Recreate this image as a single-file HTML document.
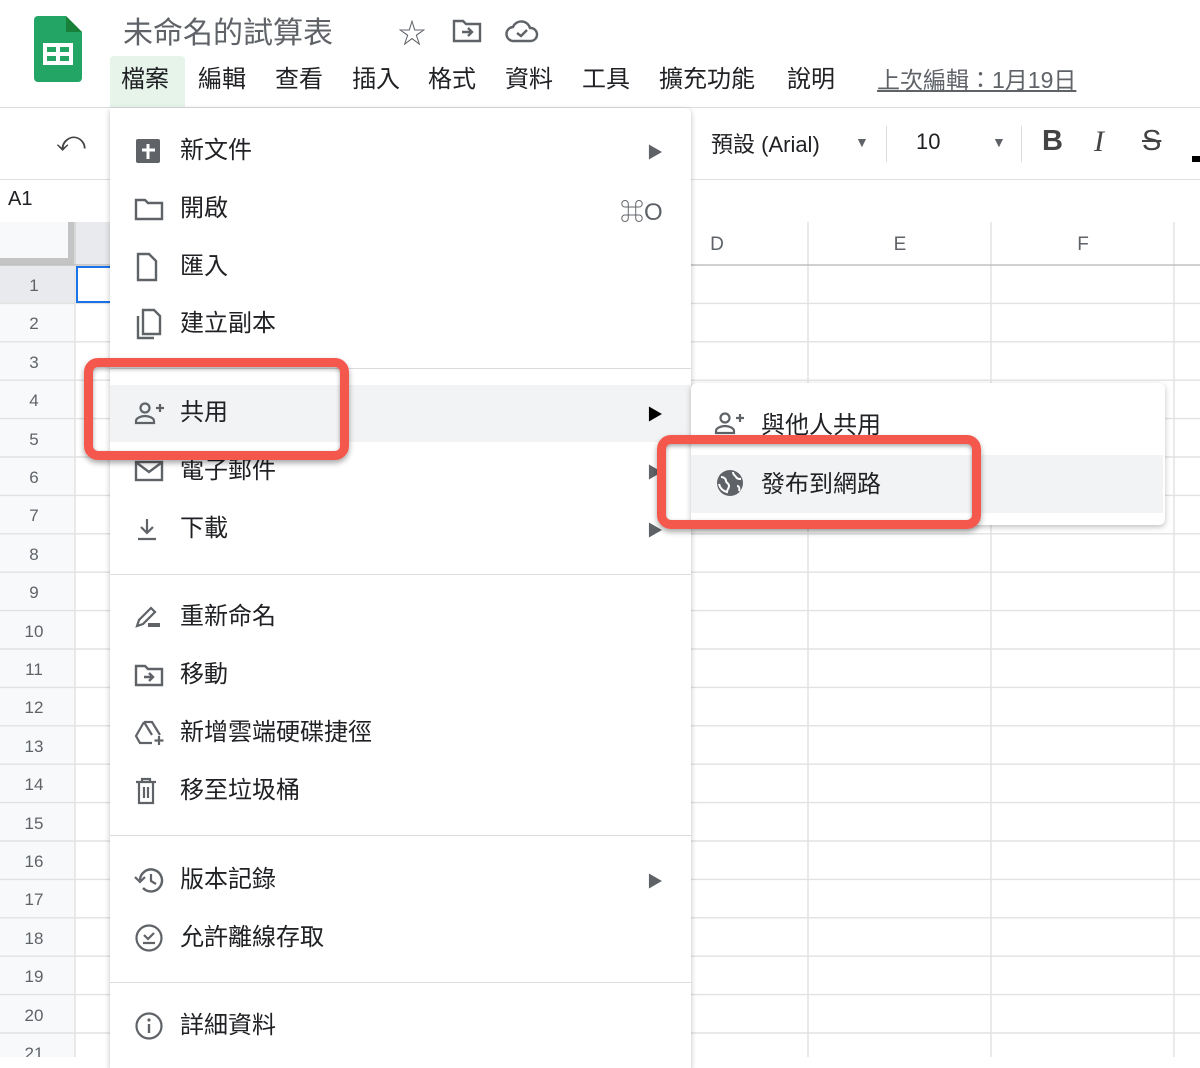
<!DOCTYPE html>
<html><head><meta charset="utf-8"><style>
*{margin:0;padding:0;box-sizing:border-box}
body{width:1200px;height:1057px;overflow:hidden;background:#fff;font-family:"Liberation Sans","Noto Sans CJK TC",sans-serif;color:#202124;position:relative}
.a{position:absolute}
.mb{position:absolute;top:62px;font-size:24px;color:#202124;line-height:36px}
.it{position:absolute;left:110px;width:581px;height:57px}
.it .t{position:absolute;left:70px;top:50%;transform:translateY(-50%);font-size:24px;line-height:30px;color:#202124}
.it svg{position:absolute;left:24px;top:50%;transform:translateY(-50%)}
.arr{position:absolute;left:537px;top:50%;transform:translateY(-50%);font-size:16px;color:#5f6368}
.sep{position:absolute;left:110px;width:581px;height:1px;background:#dadce0}
</style></head><body>
<svg class="a" style="left:34px;top:16px" width="48" height="66" viewBox="0 0 48 66"><path d="M4 0h28l16 16v46a4 4 0 0 1-4 4H4a4 4 0 0 1-4-4V4a4 4 0 0 1 4-4z" fill="#23a566"/><path d="M32 0v16h16z" fill="#188038"/><rect x="9" y="27" width="30" height="22" fill="#fff"/><rect x="13" y="31" width="9" height="5" fill="#23a566"/><rect x="26" y="31" width="9" height="5" fill="#23a566"/><rect x="13" y="40" width="9" height="5" fill="#23a566"/><rect x="26" y="40" width="9" height="5" fill="#23a566"/></svg>
<div class="a" style="left:123px;top:8px;font-size:30px;color:#5f6368">未命名的試算表</div>
<div class="a" style="left:398px;top:12px;font-size:28px;color:#5f6368">☆</div>
<svg class="a" style="left:452px;top:18px" width="30" height="26" viewBox="0 0 30 26"><path d="M2 3h9l3 3h14v17H2z" fill="none" stroke="#5f6368" stroke-width="2.4"/><path d="M10 14h10M16 10l4 4-4 4" fill="none" stroke="#5f6368" stroke-width="2.4"/></svg>
<svg class="a" style="left:505px;top:18px" width="34" height="26" viewBox="0 0 34 26"><path d="M9 23a7 7 0 0 1-1-14 9 9 0 0 1 17 1 6 6 0 0 1 1 13z" fill="none" stroke="#5f6368" stroke-width="2.4"/><path d="M12 15l4 3 6-6" fill="none" stroke="#5f6368" stroke-width="2.4"/></svg>
<div class="a" style="left:110px;top:56px;width:75px;height:52px;background:#e6f4ea;border-radius:4px 4px 0 0"></div>
<div class="mb" style="left:121px">檔案</div><div class="mb" style="left:198px">編輯</div><div class="mb" style="left:275px">查看</div><div class="mb" style="left:352px">插入</div><div class="mb" style="left:428px">格式</div><div class="mb" style="left:505px">資料</div><div class="mb" style="left:582px">工具</div><div class="mb" style="left:659px">擴充功能</div><div class="mb" style="left:787px">說明</div>
<div class="mb" style="left:877px;color:#5f6368;text-decoration:underline;font-size:23px">上次編輯：1月19日</div>
<div class="a" style="left:0;top:107px;width:1200px;height:1px;background:#dadce0"></div>
<div class="a" style="left:56px;top:126px;font-size:28px;color:#444">⤺</div>
<div class="a" style="left:711px;top:127px;font-size:22px;color:#202124">預設 (Arial)</div>
<div class="a" style="left:855px;top:134px;font-size:14px;color:#5f6368">▼</div>
<div class="a" style="left:886px;top:126px;width:1px;height:36px;background:#dadce0"></div>
<div class="a" style="left:916px;top:129px;font-size:22px">10</div>
<div class="a" style="left:992px;top:134px;font-size:14px;color:#5f6368">▼</div>
<div class="a" style="left:1021px;top:126px;width:1px;height:36px;background:#dadce0"></div>
<div class="a" style="left:1042px;top:125px;font-size:29px;font-weight:bold;color:#444">B</div>
<div class="a" style="left:1094px;top:125px;font-size:30px;font-style:italic;color:#444;font-family:'Liberation Serif',serif">I</div>
<div class="a" style="left:1142px;top:125px;font-size:29px;color:#444;text-decoration:line-through">S</div>
<div class="a" style="left:1192px;top:156px;width:8px;height:6px;background:#000"></div>
<div class="a" style="left:0;top:179px;width:1200px;height:1px;background:#e0e0e0"></div>
<div class="a" style="left:8px;top:188px;font-size:20px">A1</div>
<div class="a" style="left:0;top:222px;width:1200px;height:1px;background:#c0c0c0"></div>
<svg class="a" style="left:0;top:222px" width="1200" height="835">
<rect x="0" y="0" width="1200" height="43" fill="#fff"/>
<rect x="0" y="0" width="75" height="835" fill="#f8f9fa"/>
<rect x="68" y="0" width="8" height="43" fill="#c4c4c4"/><rect x="0" y="36" width="76" height="7" fill="#c4c4c4"/>
<rect x="76" y="0" width="40" height="43" fill="#e8eaed"/>
<rect x="0" y="43" width="75" height="38" fill="#e8eaed"/>
<g stroke="#e2e2e2" stroke-width="1.4">
<line x1="75" y1="0" x2="75" y2="835"/>
<line x1="808" y1="0" x2="808" y2="835"/><line x1="991" y1="0" x2="991" y2="835"/><line x1="1174" y1="0" x2="1174" y2="835"/>
<line x1="0" y1="43" x2="1200" y2="43" stroke="#c0c0c0"/>
<line x1="0" y1="81.4" x2="1200" y2="81.4"/><line x1="0" y1="119.8" x2="1200" y2="119.8"/><line x1="0" y1="158.2" x2="1200" y2="158.2"/><line x1="0" y1="196.6" x2="1200" y2="196.6"/><line x1="0" y1="235" x2="1200" y2="235"/><line x1="0" y1="273.4" x2="1200" y2="273.4"/><line x1="0" y1="311.8" x2="1200" y2="311.8"/><line x1="0" y1="350.2" x2="1200" y2="350.2"/><line x1="0" y1="388.6" x2="1200" y2="388.6"/><line x1="0" y1="427" x2="1200" y2="427"/><line x1="0" y1="465.4" x2="1200" y2="465.4"/><line x1="0" y1="503.8" x2="1200" y2="503.8"/><line x1="0" y1="542.2" x2="1200" y2="542.2"/><line x1="0" y1="580.6" x2="1200" y2="580.6"/><line x1="0" y1="619" x2="1200" y2="619"/><line x1="0" y1="657.4" x2="1200" y2="657.4"/><line x1="0" y1="695.8" x2="1200" y2="695.8"/><line x1="0" y1="734.2" x2="1200" y2="734.2"/><line x1="0" y1="772.6" x2="1200" y2="772.6"/><line x1="0" y1="811" x2="1200" y2="811"/>
</g>
<rect x="77" y="45" width="40" height="35" fill="none" stroke="#1a73e8" stroke-width="2"/>
<g font-family="Liberation Sans" font-size="19" fill="#5f6368" text-anchor="middle">
<text x="717" y="28">D</text><text x="900" y="28">E</text><text x="1083" y="28">F</text>
</g>
<g font-family="Liberation Sans" font-size="17" fill="#5f6368" text-anchor="middle">
<text x="34" y="69">1</text><text x="34" y="107">2</text><text x="34" y="146">3</text><text x="34" y="184">4</text><text x="34" y="223">5</text><text x="34" y="261">6</text><text x="34" y="299">7</text><text x="34" y="338">8</text><text x="34" y="376">9</text><text x="34" y="415">10</text><text x="34" y="453">11</text><text x="34" y="491">12</text><text x="34" y="530">13</text><text x="34" y="568">14</text><text x="34" y="607">15</text><text x="34" y="645">16</text><text x="34" y="683">17</text><text x="34" y="722">18</text><text x="34" y="760">19</text><text x="34" y="799">20</text><text x="34" y="837">21</text>
</g></svg>
<div class="a" style="left:110px;top:108px;width:581px;height:960px;background:#fff;box-shadow:0 2px 6px rgba(0,0,0,.25);border-radius:0 6px 0 0"></div>
<div class="it" style="top:122px"><svg width="28" height="28" viewBox="0 0 28 28"><rect x="2" y="2" width="24" height="24" rx="2" fill="#5f6368"/><path d="M14 7v15M8 13h13" stroke="#fff" stroke-width="3"/></svg><span class="t">新文件</span><span class="arr">▶</span></div>
<div class="it" style="top:180px"><svg width="30" height="26" viewBox="0 0 30 26"><path d="M2 4h9l3 3h14v16H2z" fill="none" stroke="#5f6368" stroke-width="2.4"/></svg><span class="t">開啟</span><span class="a" style="left:510px;top:12px;font-size:24px;color:#5f6368">⌘O</span></div>
<div class="it" style="top:238px"><svg width="26" height="30" viewBox="0 0 26 30"><path d="M4 2h11l7 7v19H4z" fill="none" stroke="#5f6368" stroke-width="2.4"/></svg><span class="t">匯入</span></div>
<div class="it" style="top:295px"><svg width="28" height="32" viewBox="0 0 28 32"><path d="M9 2h11l6 6v18H9z" fill="none" stroke="#5f6368" stroke-width="2.4"/><path d="M4 8v22h16" fill="none" stroke="#5f6368" stroke-width="2.4"/></svg><span class="t">建立副本</span></div>
<div class="sep" style="top:368px"></div>
<div class="a" style="left:110px;top:385px;width:581px;height:57px;background:#f1f3f4"></div>
<div class="it" style="top:384px"><svg width="32" height="24" viewBox="0 0 32 24"><circle cx="11" cy="7" r="4.5" fill="none" stroke="#5f6368" stroke-width="2.2"/><path d="M2 22v-2c0-3 5-5 9-5s9 2 9 5v2z" fill="none" stroke="#5f6368" stroke-width="2.2"/><path d="M26 3v8M22 7h8" stroke="#5f6368" stroke-width="2.2"/></svg><span class="t">共用</span><span class="arr" style="color:#000">▶</span></div>
<div class="it" style="top:442px"><svg width="30" height="24" viewBox="0 0 30 24"><rect x="2" y="3" width="26" height="18" fill="none" stroke="#5f6368" stroke-width="2.4"/><path d="M3 4l12 9 12-9" fill="none" stroke="#5f6368" stroke-width="2.4"/></svg><span class="t">電子郵件</span><span class="arr">▶</span></div>
<div class="it" style="top:500px"><svg width="26" height="26" viewBox="0 0 26 26"><path d="M13 3v14M7 11l6 6 6-6M4 23h18" fill="none" stroke="#5f6368" stroke-width="2.2"/></svg><span class="t">下載</span><span class="arr">▶</span></div>
<div class="sep" style="top:574px"></div>
<div class="it" style="top:588px"><svg width="28" height="26" viewBox="0 0 28 26"><path d="M3 22l2-6L17 4l4 4L9 20z" fill="none" stroke="#5f6368" stroke-width="2.2"/><rect x="14" y="19" width="12" height="4" fill="#5f6368"/></svg><span class="t">重新命名</span></div>
<div class="it" style="top:646px"><svg width="30" height="26" viewBox="0 0 30 26"><path d="M2 4h9l3 3h14v16H2z" fill="none" stroke="#5f6368" stroke-width="2.4"/><path d="M10 15h9M15 11l4 4-4 4" fill="none" stroke="#5f6368" stroke-width="2.4"/></svg><span class="t">移動</span></div>
<div class="it" style="top:704px"><svg width="32" height="28" viewBox="0 0 32 28"><path d="M10 3h8l8 13M10 3L2 17l4 7h12M10 3l8 13" fill="none" stroke="#5f6368" stroke-width="2.2"/><path d="M25 17v9M20.5 21.5h9" stroke="#5f6368" stroke-width="2.2"/></svg><span class="t">新增雲端硬碟捷徑</span></div>
<div class="it" style="top:762px"><svg width="24" height="28" viewBox="0 0 24 28"><path d="M2 5h20M8 5V2h8v3M5 5v21h14V5M10 10v11M14 10v11" fill="none" stroke="#5f6368" stroke-width="2.2"/></svg><span class="t">移至垃圾桶</span></div>
<div class="sep" style="top:835px"></div>
<div class="it" style="top:851px"><svg width="30" height="28" viewBox="0 0 30 28"><path d="M6 14a11 11 0 1 1 3 8" fill="none" stroke="#5f6368" stroke-width="2.4"/><path d="M1 11l5 5 5-5" fill="none" stroke="#5f6368" stroke-width="2.2"/><path d="M17 8v7l5 3" fill="none" stroke="#5f6368" stroke-width="2.2"/></svg><span class="t">版本記錄</span><span class="arr">▶</span></div>
<div class="it" style="top:909px"><svg width="30" height="30" viewBox="0 0 30 30"><circle cx="15" cy="15" r="12.5" fill="none" stroke="#5f6368" stroke-width="2.2"/><path d="M10 12l4 4 6-6M9 20h12" fill="none" stroke="#5f6368" stroke-width="2.2"/></svg><span class="t">允許離線存取</span></div>
<div class="sep" style="top:982px"></div>
<div class="it" style="top:997px"><svg width="30" height="30" viewBox="0 0 30 30"><circle cx="15" cy="15" r="12.5" fill="none" stroke="#5f6368" stroke-width="2.2"/><path d="M15 13v9" stroke="#5f6368" stroke-width="2.4"/><circle cx="15" cy="9" r="1.6" fill="#5f6368"/></svg><span class="t">詳細資料</span></div>
<div class="a" style="left:691px;top:383px;width:474px;height:142px;background:#fff;box-shadow:0 2px 6px rgba(0,0,0,.25);border-radius:6px"></div>
<div class="a" style="left:691px;top:455px;width:472px;height:58px;background:#f1f3f4"></div>
<svg class="a" style="left:714px;top:411px" width="32" height="24" viewBox="0 0 32 24"><circle cx="11" cy="7" r="4.5" fill="none" stroke="#5f6368" stroke-width="2.2"/><path d="M2 22v-2c0-3 5-5 9-5s9 2 9 5v2z" fill="none" stroke="#5f6368" stroke-width="2.2"/><path d="M26 3v8M22 7h8" stroke="#5f6368" stroke-width="2.2"/></svg>
<div class="a" style="left:761px;top:405px;font-size:24px">與他人共用</div>
<svg class="a" style="left:715px;top:468px" width="30" height="30" viewBox="0 0 30 30"><circle cx="15" cy="15" r="13" fill="#5f6368"/><path d="M6 9c3 0 5 2 5 4s3 2 3 5-2 3-2 6c-4-1-7-4-8-8M18 4c0 3 2 3 3 5s3 2 5 2M22 18c2 0 3 2 2 5" fill="none" stroke="#fff" stroke-width="2"/></svg>
<div class="a" style="left:761px;top:464px;font-size:24px">發布到網路</div>
<div class="a" style="left:84px;top:358px;width:265px;height:102px;border:9px solid #f4574b;border-radius:14px;box-shadow:0 3px 6px rgba(0,0,0,.35), inset 0 2px 4px rgba(0,0,0,.35)"></div>
<div class="a" style="left:657px;top:435px;width:324px;height:94px;border:9px solid #f4574b;border-radius:14px;box-shadow:0 3px 6px rgba(0,0,0,.35), inset 0 2px 4px rgba(0,0,0,.35)"></div>
</body></html>
